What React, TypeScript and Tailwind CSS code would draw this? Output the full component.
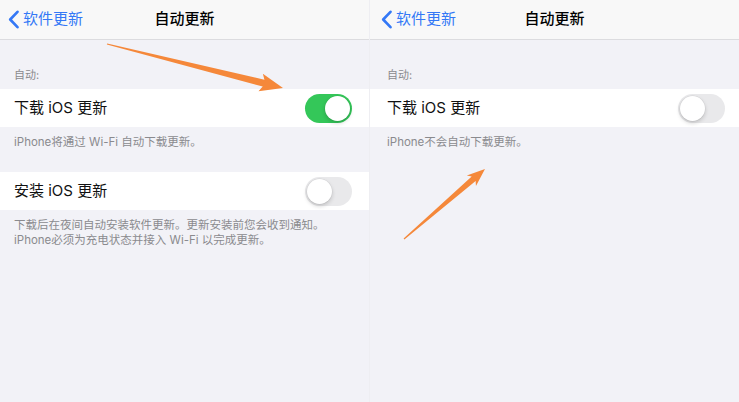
import React from 'react'

type Pt = [number, number]

// tapered arrow: thin tail, wide shaft near the head, triangular tip
const arrowPoints = (tail: Pt, tip: Pt, headLen: number, headHalf: number, shaftHalf: number) => {
  const dx = tip[0] - tail[0]
  const dy = tip[1] - tail[1]
  const len = Math.hypot(dx, dy)
  const ux = dx / len
  const uy = dy / len
  const px = -uy
  const py = ux
  const bx = tip[0] - ux * headLen
  const by = tip[1] - uy * headLen
  const pts: Pt[] = [
    [tail[0] + px * 0.6, tail[1] + py * 0.6],
    [bx + px * shaftHalf, by + py * shaftHalf],
    [bx - ux * 3 + px * headHalf, by - uy * 3 + py * headHalf],
    tip,
    [bx - ux * 3 - px * headHalf, by - uy * 3 - py * headHalf],
    [bx - px * shaftHalf, by - py * shaftHalf],
    [tail[0] - px * 0.6, tail[1] - py * 0.6],
  ]
  return pts.map((p) => p.join(',')).join(' ')
}

const Toggle: React.FC<{ on?: boolean }> = ({ on }) => (
  <div
    className={`w-[47px] h-[29px] rounded-full p-[2px] flex ${
      on ? 'bg-[#34c759] justify-end' : 'bg-[#e9e9eb] justify-start'
    }`}
  >
    <div className="w-[25px] h-[25px] rounded-full bg-white shadow-[0_2px_4px_rgba(0,0,0,0.18),0_0_0_0.5px_rgba(0,0,0,0.06)]" />
  </div>
)

const NavBar: React.FC<{ pl: string }> = ({ pl }) => (
  <div className={`h-[40px] bg-[#f8f8f8] border-b border-[#dcdcdf] flex items-center relative ${pl}`}>
    <div className="flex items-center gap-[3px] text-[#3478f6] text-[15px]">
      <svg width="12" height="19" viewBox="0 0 12 19" fill="none">
        <path d="M9.5 1.8L2.2 9.5l7.3 7.7" stroke="#3478f6" strokeWidth="2.6" strokeLinecap="round" strokeLinejoin="round" />
      </svg>
      <span>软件更新</span>
    </div>
    <div className="absolute inset-0 flex items-center justify-center text-[15px] font-medium text-black pointer-events-none">
      自动更新
    </div>
  </div>
)

const Row: React.FC<{ label: string; on?: boolean; pl: string; pr: string }> = ({ label, on, pl, pr }) => (
  <div className={`h-[38px] bg-white flex items-center justify-between ${pl} ${pr}`}>
    <span className="text-[15px] text-[#111]">{label}</span>
    <Toggle on={on} />
  </div>
)

const Note: React.FC<{ children: React.ReactNode; pl: string }> = ({ children, pl }) => (
  <div className={`text-[11.5px] leading-[15px] text-[#8a8a8e] pt-[8px] ${pl}`}>{children}</div>
)

export default function App() {
  return (
    <div
      className="w-[739px] h-[402px] bg-[#f2f2f7] flex relative overflow-hidden"
      style={{ fontFamily: 'Inter, "Noto Sans CJK SC", sans-serif' }}
    >
      {/* download on, install off */}
      <div className="w-[369px] flex flex-col">
        <NavBar pl="pl-[8px]" />
        <div className="text-[11px] leading-[16px] text-[#8a8a8e] pl-[14px] pt-[27px] pb-[6px]">自动:</div>
        <Row label="下载 iOS 更新" on pl="pl-[14px]" pr="pr-[17px]" />
        <Note pl="pl-[14px]">iPhone将通过 Wi-Fi 自动下载更新。</Note>
        <div className="h-[22px]" />
        <Row label="安装 iOS 更新" pl="pl-[14px]" pr="pr-[17px]" />
        <Note pl="pl-[14px]">
          下载后在夜间自动安装软件更新。更新安装前您会收到通知。
          <br />
          iPhone必须为充电状态并接入 Wi-Fi 以完成更新。
        </Note>
      </div>

      {/* download off */}
      <div className="w-[370px] flex flex-col border-l border-[#eeeef2]">
        <NavBar pl="pl-[11px]" />
        <div className="text-[11px] leading-[16px] text-[#8a8a8e] pl-[17px] pt-[27px] pb-[6px]">自动:</div>
        <Row label="下载 iOS 更新" pl="pl-[17px]" pr="pr-[14px]" />
        <Note pl="pl-[17px]">iPhone不会自动下载更新。</Note>
      </div>

      <svg className="absolute inset-0 pointer-events-none" width="739" height="402">
        <polygon points={arrowPoints([107, 44], [283, 88], 20, 9, 3.5)} fill="#f5883a" />
        <polygon points={arrowPoints([404, 239], [485, 169], 15, 7, 3)} fill="#f5883a" />
      </svg>
    </div>
  )
}
